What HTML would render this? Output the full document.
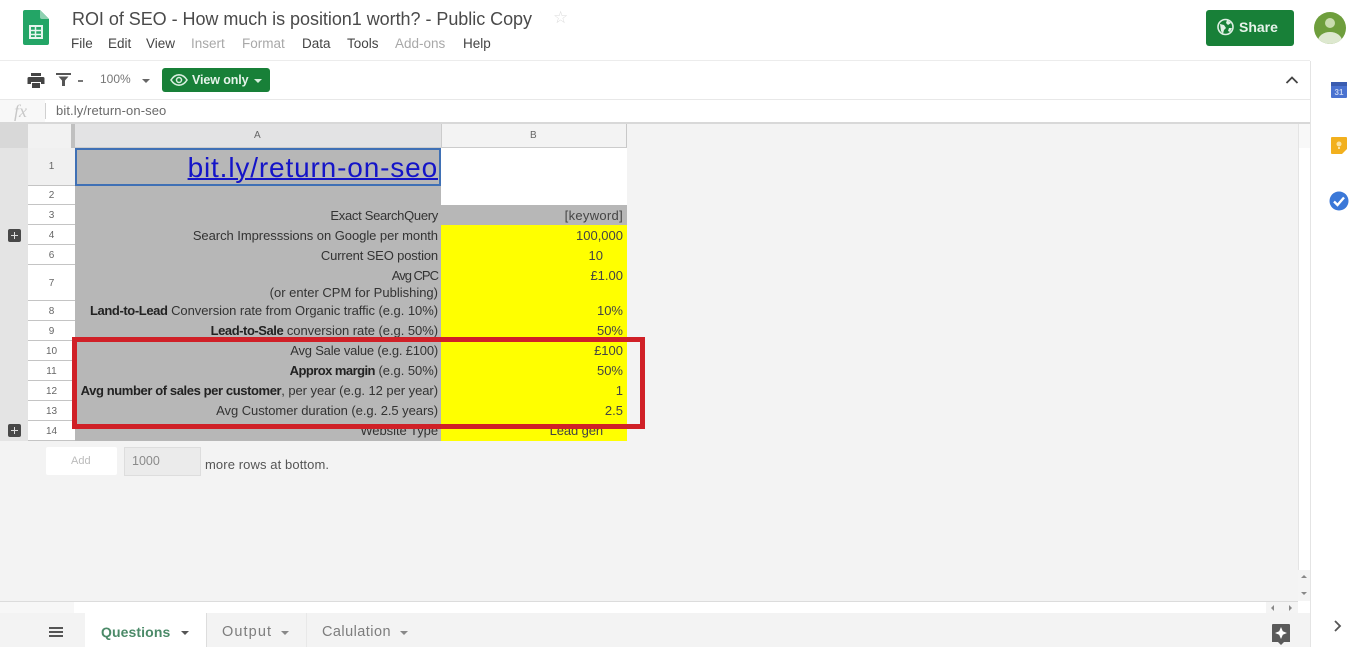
<!DOCTYPE html>
<html><head><meta charset="utf-8"><title>ROI of SEO</title>
<style>
html,body{margin:0;padding:0;width:1360px;height:647px;overflow:hidden;background:#fff;font-family:"Liberation Sans",sans-serif;}
#p{position:relative;width:1360px;height:647px;overflow:hidden;background:#fff;}
.a{position:absolute;}
.t{position:absolute;white-space:nowrap;}
.m{top:36px;font-size:13.5px;line-height:16px;color:#444;}
.g{color:#a8a8a8;}
.rn{position:absolute;left:28px;width:47px;background:#fff;border-bottom:1px solid #c4c4c4;box-sizing:border-box;text-align:center;font-size:10px;color:#666;line-height:21px;}
.c{position:absolute;right:922px;white-space:nowrap;font-size:13px;line-height:20px;color:#333;letter-spacing:-.05px;}
.v{position:absolute;right:737px;white-space:nowrap;font-size:13px;line-height:20px;color:#444;}
b{color:#222;letter-spacing:-.4px;}
</style></head><body><div id="p">

<!-- sheets logo -->
<svg class="a" style="left:23px;top:10px" width="26" height="36" viewBox="0 0 26 36"><path d="M2 0H17L26 9V33a2 2 0 0 1-2 2H2a2 2 0 0 1-2-2V2a2 2 0 0 1 2-2z" fill="#23a566"/><path d="M17 0L26 9H19a2 2 0 0 1-2-2z" fill="#8ed1b1"/><path d="M7 16H19V28H7z" fill="none" stroke="#e6f5ee" stroke-width="2"/><path d="M7 20.5H19M7 24.5H19M12.5 16V28" stroke="#e6f5ee" stroke-width="1.5"/></svg>

<div class="t" style="left:72px;top:8px;font-size:18px;line-height:22px;color:#4a4a4a;letter-spacing:-.04px">ROI of SEO - How much is position1 worth? - Public Copy</div>
<div class="t" style="left:553px;top:8px;font-size:17px;line-height:20px;color:#dcdcdc">☆</div>
<div class="t m" style="left:71px">File</div>
<div class="t m" style="left:108px">Edit</div>
<div class="t m" style="left:146px">View</div>
<div class="t m g" style="left:191px">Insert</div>
<div class="t m g" style="left:242px">Format</div>
<div class="t m" style="left:302px">Data</div>
<div class="t m" style="left:347px">Tools</div>
<div class="t m g" style="left:395px">Add-ons</div>
<div class="t m" style="left:463px">Help</div>

<!-- share -->
<div class="a" style="left:1206px;top:10px;width:88px;height:36px;background:#188038;border-radius:3px"></div>
<svg class="a" style="left:1217px;top:18px" width="17" height="18" viewBox="0 0 17 18"><circle cx="8.5" cy="9" r="7.5" fill="none" stroke="#dff0e4" stroke-width="1.6"/><path d="M3 6l4 1 2 3-2 2-1 4-2-3zM10 2l4 3-3 2-2-2zM12 10l3 0-2 4-2-1z" fill="#dff0e4"/></svg>
<div class="t" style="left:1239px;top:19px;font-size:14px;font-weight:bold;line-height:17px;color:#e6f3ea">Share</div>
<!-- avatar -->
<div class="a" style="left:1314px;top:12px;width:32px;height:32px;border-radius:50%;background:#6e9e3c;overflow:hidden">
 <div class="a" style="left:11px;top:6px;width:10px;height:10px;border-radius:50%;background:#c9dcae"></div>
 <div class="a" style="left:4px;top:20px;width:24px;height:18px;border-radius:50%;background:#dde8cf"></div>
</div>

<div class="a" style="left:0;top:60px;width:1310px;height:1px;background:#ececec"></div>

<!-- toolbar -->
<svg class="a" style="left:27px;top:72px" width="18" height="17" viewBox="0 0 18 17"><path d="M4 1H14V4H4zM2 5H16a1.5 1.5 0 0 1 1.5 1.5V12H14V10H4V12H.5V6.5A1.5 1.5 0 0 1 2 5zM5 11H13V16H5z" fill="#444"/></svg>
<svg class="a" style="left:56px;top:73px" width="15" height="13" viewBox="0 0 15 13"><path d="M0 0H15V2H0zM2.5 3.5H12.5L9 7.5V13H6V7.5z" fill="#555"/></svg>
<div class="a" style="left:78px;top:80px;width:5px;height:2px;background:#777"></div>
<div class="t" style="left:100px;top:72px;font-size:12px;line-height:14px;color:#777">100%</div>
<div class="a" style="left:142px;top:79px;border:4px solid transparent;border-top-color:#666;border-bottom:0"></div>
<div class="a" style="left:162px;top:68px;width:108px;height:24px;background:#188038;border-radius:3px"></div>
<svg class="a" style="left:170px;top:72px" width="18" height="16" viewBox="0 0 18 16"><path d="M1 8C3.5 4 6 2.8 9 2.8S14.500 4 17 8C14.500 12 12 13.200 9 13.200S3.500 12 1 8z" fill="none" stroke="#d8eede" stroke-width="1.6"/><circle cx="9" cy="8" r="2.500" fill="none" stroke="#d8eede" stroke-width="1.500"/></svg>
<div class="t" style="left:192px;top:72px;font-size:12.5px;font-weight:bold;line-height:16px;color:#e6f3ea;letter-spacing:-.1px">View only</div>
<div class="a" style="left:254px;top:79px;border:4px solid transparent;border-top-color:#d8eede;border-bottom:0"></div>
<svg class="a" style="left:1285px;top:75px" width="14" height="10" viewBox="0 0 14 10"><path d="M1.500 8L7 2.500 12.500 8" fill="none" stroke="#444" stroke-width="1.800"/></svg>

<!-- formula bar -->
<div class="a" style="left:0;top:99px;width:1310px;height:1px;background:#e8e8e8"></div>
<div class="a" style="left:0;top:100px;width:45px;height:22px;background:#f8f8f8"></div>
<div class="t" style="left:14px;top:100px;font-family:'Liberation Serif',serif;font-style:italic;font-size:18px;line-height:22px;color:#c8c8c8">fx</div>
<div class="a" style="left:45px;top:103px;width:1px;height:16px;background:#d0d0d0"></div>
<div class="t" style="left:56px;top:103px;font-size:13px;line-height:15px;color:#6a6a6a;letter-spacing:.1px">bit.ly/return-on-seo</div>
<div class="a" style="left:0;top:122px;width:1310px;height:2px;background:#d8d8d8"></div>

<!-- grid background -->
<div class="a" style="left:0;top:124px;width:1310px;height:477px;background:#f3f3f3"></div>
<div class="a" style="left:0;top:124px;width:28px;height:24px;background:#d8d8d8"></div>
<div class="a" style="left:0;top:148px;width:28px;height:293px;background:#e4e4e4"></div>
<div class="a" style="left:28px;top:124px;width:43px;height:24px;background:#f2f2f2"></div>
<div class="a" style="left:71px;top:124px;width:4px;height:24px;background:#c0c0c0"></div>
<div class="a" style="left:75px;top:124px;width:366px;height:24px;background:#e3e3e4;border-bottom:1px solid #ccc;box-sizing:border-box"></div>
<div class="a" style="left:441px;top:124px;width:186px;height:24px;background:#f3f3f3;border-left:1px solid #ccc;border-right:1px solid #c8c8c8;border-bottom:1px solid #ccc;box-sizing:border-box"></div>
<div class="t" style="left:254px;top:130px;font-size:10px;line-height:12px;color:#666">A</div>
<div class="t" style="left:530px;top:130px;font-size:10px;line-height:12px;color:#666">B</div>

<!-- row numbers -->
<div class="rn" style="top:148px;height:38px;line-height:37px;background:#f0f0f0">1</div>
<div class="rn" style="top:186px;height:19px;line-height:19px">2</div>
<div class="rn" style="top:205px;height:20px">3</div>
<div class="rn" style="top:225px;height:20px">4</div>
<div class="rn" style="top:245px;height:20px">6</div>
<div class="rn" style="top:265px;height:36px;line-height:37px">7</div>
<div class="rn" style="top:301px;height:20px">8</div>
<div class="rn" style="top:321px;height:20px">9</div>
<div class="rn" style="top:341px;height:20px">10</div>
<div class="rn" style="top:361px;height:20px">11</div>
<div class="rn" style="top:381px;height:20px">12</div>
<div class="rn" style="top:401px;height:20px">13</div>
<div class="rn" style="top:421px;height:20px">14</div>

<!-- plus buttons -->
<div class="a" style="left:8px;top:229px;width:13px;height:13px;background:#484848;border-radius:2px"></div>
<div class="a" style="left:11px;top:235px;width:7px;height:1px;background:#ddd"></div>
<div class="a" style="left:14px;top:232px;width:1px;height:7px;background:#ddd"></div>
<div class="a" style="left:8px;top:424px;width:13px;height:13px;background:#484848;border-radius:2px"></div>
<div class="a" style="left:11px;top:430px;width:7px;height:1px;background:#ddd"></div>
<div class="a" style="left:14px;top:427px;width:1px;height:7px;background:#ddd"></div>

<!-- cells -->
<div class="a" style="left:75px;top:148px;width:366px;height:293px;background:#b7b7b7"></div>
<div class="a" style="left:441px;top:148px;width:186px;height:57px;background:#fff"></div>
<div class="a" style="left:441px;top:205px;width:186px;height:20px;background:#b7b7b7"></div>
<div class="a" style="left:441px;top:225px;width:186px;height:216px;background:#ffff00"></div>
<div class="a" style="left:75px;top:148px;width:366px;height:38px;border:2px solid #3f70b5;box-sizing:border-box"></div>
<div class="t" style="right:922px;top:151px;font-size:28px;line-height:33px;color:#1414c8;text-decoration:underline;text-decoration-thickness:1.5px;letter-spacing:.85px">bit.ly/return-on-seo</div>

<div class="c" style="top:206px;letter-spacing:-.3px">Exact SearchQuery</div>
<div class="c" style="top:226px">Search Impresssions on Google per month</div>
<div class="c" style="top:246px;letter-spacing:-.15px">Current SEO postion</div>
<div class="c" style="top:266px;letter-spacing:-1px">Avg CPC</div>
<div class="c" style="top:283px;letter-spacing:0">(or enter CPM for Publishing)</div>
<div class="c" style="top:301px"><b>Land-to-Lead</b> Conversion rate from Organic traffic (e.g. 10%)</div>
<div class="c" style="top:321px"><b style="letter-spacing:-.45px">Lead-to-Sale</b> conversion rate (e.g. 50%)</div>
<div class="c" style="top:341px;letter-spacing:-.2px">Avg Sale value (e.g. £100)</div>
<div class="c" style="top:361px"><b style="letter-spacing:-.55px">Approx margin</b> (e.g. 50%)</div>
<div class="c" style="top:381px"><b>Avg number of sales per customer</b>, per year (e.g. 12 per year)</div>
<div class="c" style="top:401px">Avg Customer duration (e.g. 2.5 years)</div>
<div class="c" style="top:421px;letter-spacing:-.05px">Website Type</div>

<div class="v" style="top:206px;letter-spacing:.3px">[keyword]</div>
<div class="v" style="top:226px">100,000</div>
<div class="v" style="top:246px;right:757px">10</div>
<div class="v" style="top:266px">£1.00</div>
<div class="v" style="top:301px">10%</div>
<div class="v" style="top:321px">50%</div>
<div class="v" style="top:341px">£100</div>
<div class="v" style="top:361px">50%</div>
<div class="v" style="top:381px">1</div>
<div class="v" style="top:401px">2.5</div>
<div class="v" style="top:421px;right:757px;letter-spacing:-.1px">Lead gen</div>

<!-- red box -->
<div class="a" style="left:72px;top:337px;width:573px;height:92px;border:5px solid #d02027;box-sizing:border-box"></div>

<!-- add rows -->
<div class="a" style="left:46px;top:447px;width:71px;height:28px;background:#fff;border-radius:2px"></div>
<div class="t" style="left:71px;top:454px;font-size:11px;line-height:14px;color:#bbb">Add</div>
<div class="a" style="left:124px;top:447px;width:77px;height:29px;background:#ebebeb;border:1px solid #ddd;box-sizing:border-box"></div>
<div class="t" style="left:132px;top:454px;font-size:12.500px;line-height:15px;color:#8a8a8a">1000</div>
<div class="t" style="left:205px;top:457px;font-size:13px;line-height:15px;color:#555;letter-spacing:.1px">more rows at bottom.</div>

<!-- right scrollbar & side panel -->
<div class="a" style="left:1298px;top:124px;width:12px;height:24px;background:#f8f8f8;border-left:1px solid #e4e4e4;box-sizing:border-box"></div>
<div class="a" style="left:1298px;top:148px;width:12px;height:453px;background:#fff;border-left:1px solid #e4e4e4;box-sizing:border-box"></div>
<div class="a" style="left:1298px;top:570px;width:12px;height:16px;background:#f4f4f4"></div>
<div class="a" style="left:1301px;top:575px;border:3px solid transparent;border-bottom-color:#888;border-top:0"></div>
<div class="a" style="left:1298px;top:586px;width:12px;height:15px;background:#f4f4f4"></div>
<div class="a" style="left:1301px;top:592px;border:3px solid transparent;border-top-color:#888;border-bottom:0"></div>
<div class="a" style="left:1310px;top:61px;width:1px;height:586px;background:#e4e4e4"></div>

<svg class="a" style="left:1331px;top:81px" width="16" height="17" viewBox="0 0 16 17"><rect y="1" width="16" height="16" rx="1" fill="#4a72d0"/><rect y="1" width="16" height="4" fill="#3a5cb0"/><text x="8" y="14" text-anchor="middle" font-family="Liberation Sans" font-size="8" font-weight="bold" fill="#c4d2f2">31</text></svg>
<svg class="a" style="left:1331px;top:137px" width="16" height="17" viewBox="0 0 16 17"><path d="M1 0H15a1 1 0 0 1 1 1V12L11 17H1a1 1 0 0 1-1-1V1a1 1 0 0 1 1-1z" fill="#f2b01e"/><circle cx="8" cy="7" r="2.500" fill="#fbe3a2"/><rect x="7" y="10" width="2" height="2" fill="#fbe3a2"/></svg>
<svg class="a" style="left:1329px;top:191px" width="20" height="20" viewBox="0 0 20 20"><circle cx="10" cy="10" r="9.500" fill="#3b78d8"/><path d="M5 10.500L8.500 14 15 6.500" fill="none" stroke="#fff" stroke-width="2.400"/></svg>
<svg class="a" style="left:1333px;top:619px" width="10" height="14" viewBox="0 0 10 14"><path d="M2 2L7 7 2 12" fill="none" stroke="#555" stroke-width="1.800"/></svg>

<!-- bottom: horizontal scroll & tabs -->
<div class="a" style="left:0;top:601px;width:1298px;height:1px;background:#dcdcdc"></div>
<div class="a" style="left:0;top:602px;width:1298px;height:11px;background:#fff"></div>
<div class="a" style="left:0;top:602px;width:74px;height:11px;background:#f7f7f7"></div>
<div class="a" style="left:1266px;top:602px;width:32px;height:11px;background:#f4f4f4"></div>
<div class="a" style="left:1271px;top:605px;border:3px solid transparent;border-right-color:#888;border-left:0"></div>
<div class="a" style="left:1289px;top:605px;border:3px solid transparent;border-left-color:#888;border-right:0"></div>
<div class="a" style="left:0;top:613px;width:1310px;height:34px;background:#f3f3f3"></div>
<div class="a" style="left:49px;top:627px;width:14px;height:2px;background:#555"></div>
<div class="a" style="left:49px;top:631px;width:14px;height:2px;background:#555"></div>
<div class="a" style="left:49px;top:635px;width:14px;height:2px;background:#555"></div>
<div class="a" style="left:85px;top:613px;width:122px;height:34px;background:#fff;border-right:1px solid #ddd;box-sizing:border-box"></div>
<div class="t" style="left:101px;top:624px;font-size:14px;font-weight:bold;line-height:17px;color:#4b8a68;letter-spacing:.1px">Questions</div>
<div class="a" style="left:181px;top:631px;border:4px solid transparent;border-top-color:#555;border-bottom:0"></div>
<div class="t" style="left:222px;top:624px;font-size:14.500px;line-height:17px;color:#7d7d7d;letter-spacing:1.1px">Output</div>
<div class="a" style="left:281px;top:631px;border:4px solid transparent;border-top-color:#888;border-bottom:0"></div>
<div class="a" style="left:306px;top:613px;width:1px;height:34px;background:#e8e8e8"></div>
<div class="t" style="left:322px;top:624px;font-size:14.500px;line-height:17px;color:#7d7d7d;letter-spacing:.45px">Calulation</div>
<div class="a" style="left:400px;top:631px;border:4px solid transparent;border-top-color:#888;border-bottom:0"></div>
<svg class="a" style="left:1272px;top:624px" width="18" height="22" viewBox="0 0 18 22"><path d="M1 0H17a1 1 0 0 1 1 1V18H12L9 21 6 18H0V1a1 1 0 0 1 1-1z" fill="#5a5a5a"/><path d="M9 3L10.800 7.200 15 9 10.800 10.800 9 15 7.200 10.800 3 9 7.200 7.200z" fill="#fff"/></svg>

</div></body></html>
